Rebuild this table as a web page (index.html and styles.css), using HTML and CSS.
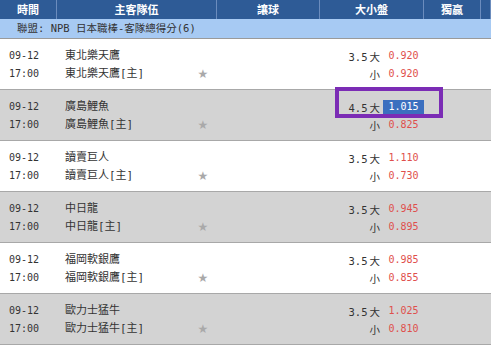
FILE: index.html
```html
<!DOCTYPE html>
<html lang="zh-Hant">
<head>
<meta charset="utf-8">
<link rel="stylesheet" href="styles.css">
</head>
<body>
<div class="board">
  <div class="head">
    <div class="h">時間</div>
    <div class="h">主客隊伍</div>
    <div class="h">讓球</div>
    <div class="h">大小盤</div>
    <div class="h">獨贏</div>
    <div class="h"></div>
  </div>
  <div class="league">聯盟: NPB 日本職棒-客隊總得分(6)</div>

  <div class="row">
    <div class="date"><div>09-12</div><div>17:00</div></div>
    <div class="team"><div>東北樂天鷹</div><div>東北樂天鷹[主]</div></div>
    <div class="star">★</div>
    <div></div>
    <div class="ou">
      <div class="line"><span class="lab">3.5<span class="side">大</span></span><span class="val">0.920</span></div>
      <div class="line"><span class="lab">小</span><span class="val">0.920</span></div>
    </div>
  </div>

  <div class="row alt">
    <div class="date"><div>09-12</div><div>17:00</div></div>
    <div class="team"><div>廣島鯉魚</div><div>廣島鯉魚[主]</div></div>
    <div class="star">★</div>
    <div></div>
    <div class="ou">
      <div class="line"><span class="lab">4.5<span class="side">大</span></span><span class="val hi">1.015</span></div>
      <div class="line"><span class="lab">小</span><span class="val">0.825</span></div>
    </div>
  </div>

  <div class="row">
    <div class="date"><div>09-12</div><div>17:00</div></div>
    <div class="team"><div>讀賣巨人</div><div>讀賣巨人[主]</div></div>
    <div class="star">★</div>
    <div></div>
    <div class="ou">
      <div class="line"><span class="lab">3.5<span class="side">大</span></span><span class="val">1.110</span></div>
      <div class="line"><span class="lab">小</span><span class="val">0.730</span></div>
    </div>
  </div>

  <div class="row alt">
    <div class="date"><div>09-12</div><div>17:00</div></div>
    <div class="team"><div>中日龍</div><div>中日龍[主]</div></div>
    <div class="star">★</div>
    <div></div>
    <div class="ou">
      <div class="line"><span class="lab">3.5<span class="side">大</span></span><span class="val">0.945</span></div>
      <div class="line"><span class="lab">小</span><span class="val">0.895</span></div>
    </div>
  </div>

  <div class="row">
    <div class="date"><div>09-12</div><div>17:00</div></div>
    <div class="team"><div>福岡軟銀鷹</div><div>福岡軟銀鷹[主]</div></div>
    <div class="star">★</div>
    <div></div>
    <div class="ou">
      <div class="line"><span class="lab">3.5<span class="side">大</span></span><span class="val">0.985</span></div>
      <div class="line"><span class="lab">小</span><span class="val">0.855</span></div>
    </div>
  </div>

  <div class="row alt">
    <div class="date"><div>09-12</div><div>17:00</div></div>
    <div class="team"><div>歐力士猛牛</div><div>歐力士猛牛[主]</div></div>
    <div class="star">★</div>
    <div></div>
    <div class="ou">
      <div class="line"><span class="lab">3.5<span class="side">大</span></span><span class="val">1.025</span></div>
      <div class="line"><span class="lab">小</span><span class="val">0.810</span></div>
    </div>
  </div>

  <div class="mark"></div>
</div>
</body>
</html>
```
FILE: styles.css
```css
* { box-sizing: border-box; }
html, body { margin: 0; padding: 0; background: #fff; }
body {
  font-family: "DejaVu Sans Mono", "Noto Sans CJK TC", monospace;
  font-size: 10px;
  color: #333;
}
.board { position: relative; width: 491px; }
.head {
  display: grid;
  grid-template-columns: 57px 160px 103px 104px 57px 10px;
  height: 19px;
  background: #2e5b96;
}
.h {
  color: #fff;
  font-family: "Noto Sans CJK TC", sans-serif;
  font-weight: bold;
  font-size: 11px;
  line-height: 19px;
  text-align: center;
  border-right: 1px solid #6b8cbd;
}
.league {
  height: 20px;
  background: #a7caf3;
  border-bottom: 1px solid #9a9a9a;
  padding-left: 17px;
  line-height: 19px;
  font-size: 10.5px;
  color: #333;
}
.row {
  display: grid;
  grid-template-columns: 57px 135px 22px 106px 104px 57px 10px;
  height: 51px;
  border-bottom: 1px solid #a8a8a8;
  background: #fff;
  padding-top: 8px;
  align-items: start;
}
.row.alt { background: #d3d3d3; }
.date { padding-left: 9px; line-height: 18px; font-size: 10px; }
.team {
  padding-left: 8px;
  line-height: 18px;
  font-size: 11px;
  white-space: nowrap;
}
.star {
  padding-top: 18px;
  line-height: 18px;
  text-align: center;
  color: #a9a9a9;
  font-family: "DejaVu Sans", sans-serif;
  font-size: 12px;
}
.ou { display: flex; flex-direction: column; }
.line {
  display: flex;
  align-items: center;
  height: 18px;
}
.lab {
  width: 60px;
  text-align: right;
  font-size: 10.5px;
  color: #333;
}
.side { margin-left: 2px; }
.val {
  margin-left: 3px;
  width: 41px;
  height: 14px;
  line-height: 14px;
  text-align: center;
  color: #df4f4c;
  font-size: 10px;
}
.val.hi { background: #3b6fbf; color: #fff; }
.mark {
  position: absolute;
  left: 335px;
  top: 87px;
  width: 108px;
  height: 31px;
  border: 4px solid #7b2cb5;
}
```
